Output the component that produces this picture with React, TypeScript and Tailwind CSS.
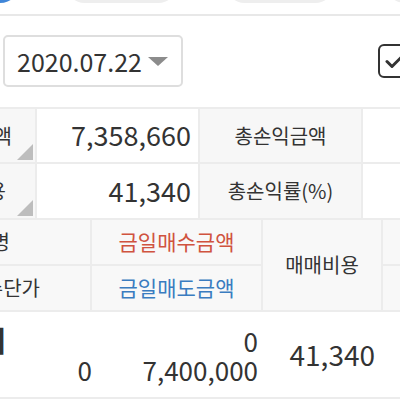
import React from 'react';

const font = { fontFamily: '"Noto Sans CJK KR", "Noto Sans", sans-serif' };

const Corner: React.FC = () => (
  <span className="absolute right-[2px] bottom-[2px] w-0 h-0 border-l-[16px] border-l-transparent border-b-[16px] border-b-[#bdbdbd]" />
);

const App: React.FC = () => {
  return (
    <div className="w-[400px] h-[400px] overflow-hidden bg-white text-[#333]" style={font}>
      {/* tab strip */}
      <div className="h-[16px] border-b-2 border-[#e8e8e8] overflow-hidden flex">
        <div className="-ml-[93px] w-[113px] h-[40px] -mt-[37px] rounded-full bg-[#3f86d8] shrink-0" />
        <div className="ml-[45px] w-[113px] h-[40px] -mt-[37px] rounded-full bg-[#eeeeee] shrink-0" />
        <div className="ml-[47px] w-[110px] h-[40px] -mt-[37px] rounded-full bg-[#eeeeee] shrink-0" />
        <div className="ml-[50px] w-[110px] h-[40px] -mt-[37px] rounded-full bg-[#eeeeee] shrink-0" />
      </div>

      {/* date + checkbox */}
      <div className="flex items-center mt-[19px] h-[52px]">
        <div className="ml-[3px] w-[180px] h-[52px] border-2 border-[#dedede] rounded-[5px] flex items-center pl-[12px] shrink-0">
          <span className="text-[25px] leading-none">2020.07.22</span>
          <span className="ml-[6px] w-0 h-0 border-l-[10px] border-r-[10px] border-t-[9px] border-l-transparent border-r-transparent border-t-[#8c8c8c]" />
        </div>
        <div className="ml-auto -mr-[12px] w-[34px] h-[34px] border-[2.5px] border-[#333] rounded-[6px] flex items-center justify-center shrink-0">
          <svg width="24" height="24" viewBox="0 0 24 24" fill="none" stroke="#333" strokeWidth="3" strokeLinecap="round" strokeLinejoin="round">
            <path d="M4 12.5l5 5L20 6.5" />
          </svg>
        </div>
      </div>

      {/* summary table */}
      <div className="mt-[20px] border-t-2 border-[#ececec] grid grid-cols-[37px_163px_163px_1fr] grid-rows-[55px_56px]">
        <div className="relative bg-[#f7f7f7] border-r-2 border-b-2 border-[#ececec] flex items-center justify-end overflow-hidden whitespace-nowrap pr-[23px] text-[20px]">
          총정산금액<Corner />
        </div>
        <div className="border-r-2 border-b-2 border-[#ececec] flex items-center justify-end pr-[7px] text-[27px]">7,358,660</div>
        <div className="bg-[#f7f7f7] border-r-2 border-b-2 border-[#ececec] flex items-center justify-center text-[20px]">총손익금액</div>
        <div className="border-b-2 border-[#ececec]" />

        <div className="relative bg-[#f7f7f7] border-r-2 border-b-2 border-[#ececec] flex items-center justify-end overflow-hidden whitespace-nowrap pr-[29px] text-[20px]">
          매매비용<Corner />
        </div>
        <div className="border-r-2 border-b-2 border-[#ececec] flex items-center justify-end pr-[7px] text-[27px]">41,340</div>
        <div className="bg-[#f7f7f7] border-r-2 border-b-2 border-[#ececec] flex items-center justify-center text-[20px]">총손익률(%)</div>
        <div className="border-b-2 border-[#ececec]" />
      </div>

      {/* detail header */}
      <div className="grid grid-cols-[92px_171px_120px_1fr] grid-rows-[46px_46px] text-[20px]">
        <div className="bg-[#f8f8f8] border-r-2 border-b-2 border-[#ececec] flex items-center justify-end overflow-hidden whitespace-nowrap pr-[80px]">종목명</div>
        <div className="bg-[#f8f8f8] border-r-2 border-b-2 border-[#ececec] flex items-center justify-center text-[21px] text-[#d0533f]">금일매수금액</div>
        <div className="row-span-2 bg-[#f8f8f8] border-r-2 border-b-2 border-[#ececec] flex items-center justify-center">매매비용</div>
        <div className="bg-[#f8f8f8] border-b-2 border-[#ececec]" />

        <div className="bg-[#f8f8f8] border-r-2 border-b-2 border-[#ececec] flex items-center justify-end overflow-hidden whitespace-nowrap pr-[50px]">매수단가</div>
        <div className="bg-[#f8f8f8] border-r-2 border-b-2 border-[#ececec] flex items-center justify-center text-[21px] text-[#3a7cc0]">금일매도금액</div>
        <div className="bg-[#f8f8f8] border-b-2 border-[#ececec]" />
      </div>

      {/* data row */}
      <div className="h-[87px] border-b-2 border-[#ececec] flex items-center text-[26px] leading-[29px]">
        <div className="w-[92px] shrink-0 flex flex-col items-end overflow-hidden whitespace-nowrap">
          <span className="pr-[86px] text-[28px] leading-[29px] font-black">피</span>
          <span>0</span>
        </div>
        <div className="w-[171px] shrink-0 flex flex-col items-end pr-[5px]">
          <span>0</span>
          <span>7,400,000</span>
        </div>
        <div className="w-[120px] shrink-0 flex justify-end pr-[8px] text-[28px]">41,340</div>
      </div>
    </div>
  );
};

export default App;
